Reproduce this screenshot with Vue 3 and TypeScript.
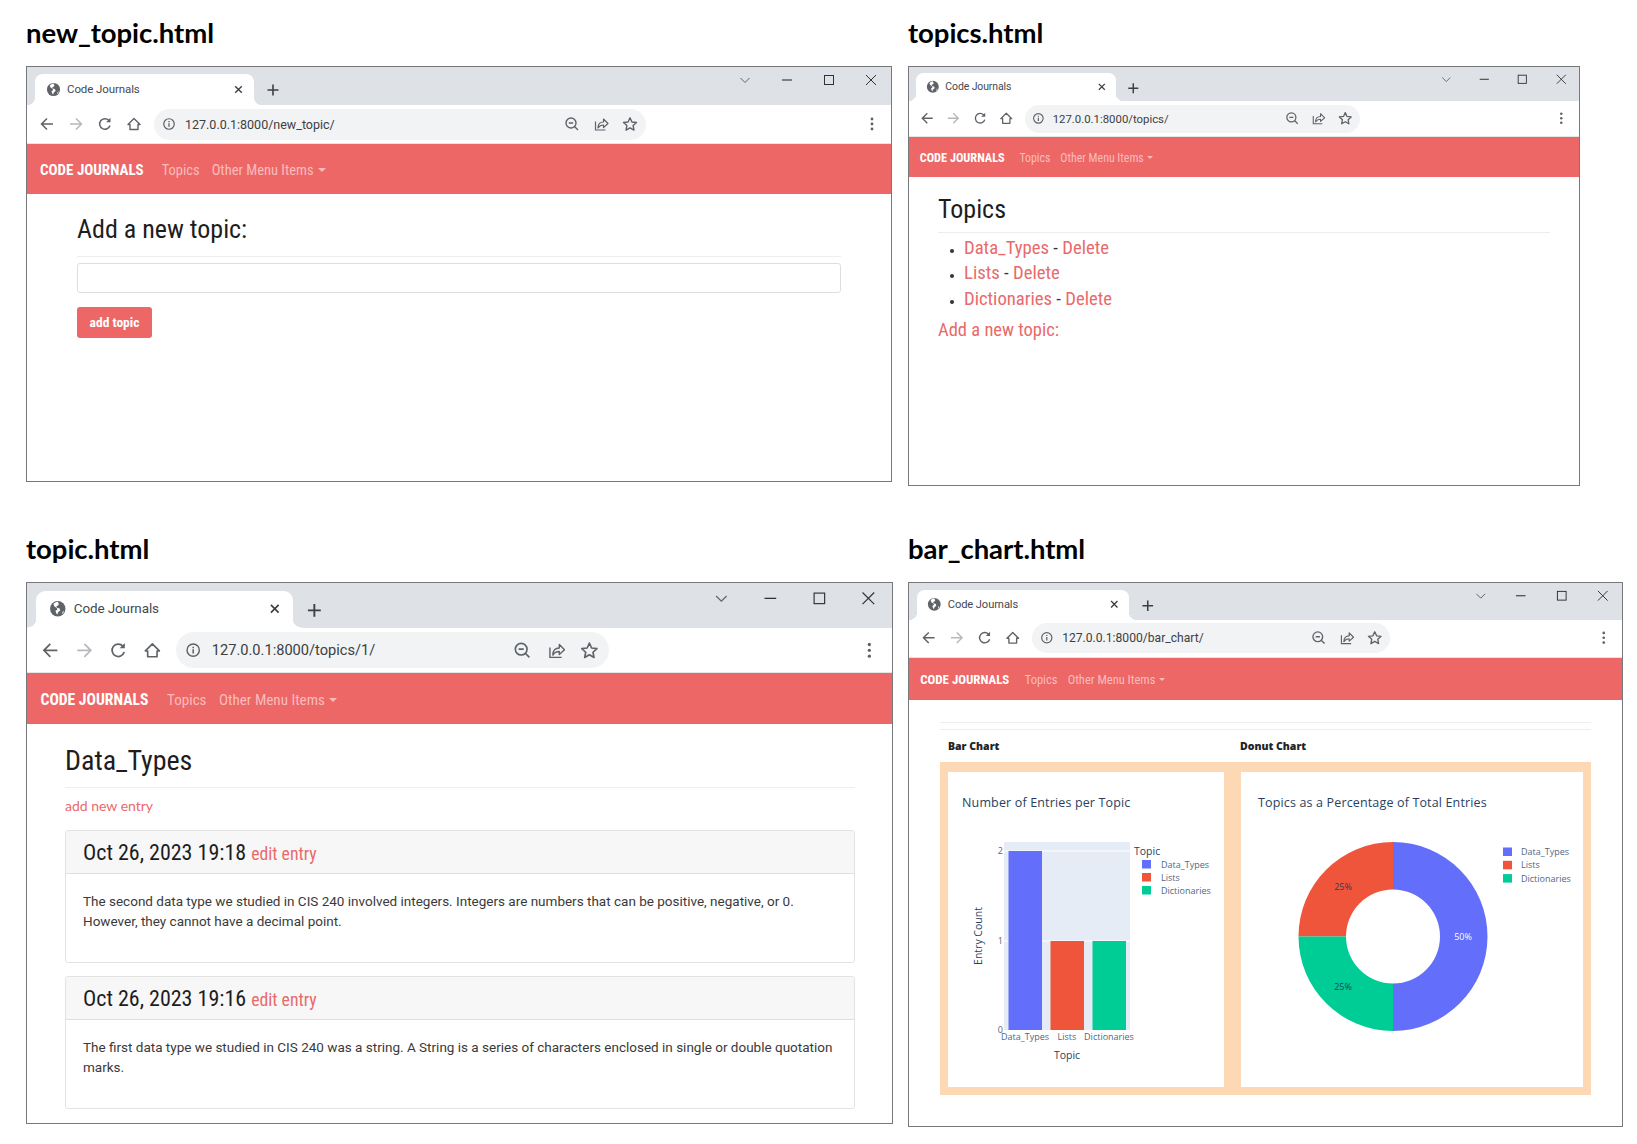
<script setup lang="ts">
interface Win { id: string; title: string; url: string }
const windows: Win[] = [
  { id: 'new', title: 'new_topic.html', url: '127.0.0.1:8000/new_topic/' },
  { id: 'topics', title: 'topics.html', url: '127.0.0.1:8000/topics/' },
  { id: 'topic', title: 'topic.html', url: '127.0.0.1:8000/topics/1/' },
  { id: 'chart', title: 'bar_chart.html', url: '127.0.0.1:8000/bar_chart/' },
]
const topics = ['Data_Types', 'Lists', 'Dictionaries']
const entries = [
  { date: 'Oct 26, 2023 19:18', lines: ['The second data type we studied in CIS 240 involved integers. Integers are numbers that can be positive, negative, or 0.', 'However, they cannot have a decimal point.'] },
  { date: 'Oct 26, 2023 19:16', lines: ['The first data type we studied in CIS 240 was a string. A String is a series of characters enclosed in single or double quotation', 'marks.'] },
]
const legend = [
  { name: 'Data_Types', color: '#636efa' },
  { name: 'Lists', color: '#ef553b' },
  { name: 'Dictionaries', color: '#00cc96' },
]
</script>

<template>
  <div class="page">
    <section v-for="w in windows" :key="w.id" class="panel">
      <h2 class="caption">{{ w.title }}</h2>
      <div class="win" :class="'win-' + w.id">
        <div class="strip">
          <div class="tab">
            <svg class="ico globe" viewBox="0 0 16 16">
              <circle cx="8" cy="8" r="7" fill="#5f6368" />
              <path d="M8 1.500c-1.500.3-3 1-4 2.200l1 2.300 2.300 1.200.2 1.600-1.600 1 .8 2.600 1 .8.5-2 2-1.600-.5-1.800-2.400-.8-.6-1.400 1.500-.6.8-1.200L8 1.500zM12.500 10.500l1-.5-.6 2-1 .8z" fill="#fff" />
            </svg>
            <span class="tab-title">Code Journals</span>
            <svg class="ico tab-x" viewBox="0 0 16 16"><path d="M4.500 4.500l7 7M11.500 4.500l-7 7" stroke="#3c4043" stroke-width="1.500" fill="none" /></svg>
          </div>
          <svg class="ico plus" viewBox="0 0 16 16"><path d="M8 2.500v11M2.500 8h11" stroke="#3c4043" stroke-width="1.600" fill="none" /></svg>
          <div class="controls">
            <svg class="ico ctl" viewBox="0 0 16 16"><path d="M3.500 6l4.500 4.500L12.500 6" stroke="#5f6368" fill="none" /></svg>
            <svg class="ico ctl" viewBox="0 0 16 16"><path d="M3 8h10" stroke="#333" stroke-width="1.100" fill="none" /></svg>
            <svg class="ico ctl" viewBox="0 0 16 16"><rect x="3.500" y="3.500" width="9" height="9" stroke="#333" fill="none" /></svg>
            <svg class="ico ctl" viewBox="0 0 16 16"><path d="M3 3l10 10M13 3L3 13" stroke="#333" fill="none" /></svg>
          </div>
        </div>
        <div class="toolbar">
          <svg class="ico nav-ico" viewBox="0 0 16 16"><path d="M14 8H2.500M8 2.500L2.500 8 8 13.500" stroke="#5f6368" stroke-width="1.500" fill="none" /></svg>
          <svg class="ico nav-ico" viewBox="0 0 16 16"><path d="M2 8h11.500M8 2.500L13.500 8 8 13.500" stroke="#b5b8bc" stroke-width="1.500" fill="none" /></svg>
          <svg class="ico nav-ico" viewBox="0 0 16 16"><path d="M13 9.500A5.300 5.300 0 1 1 11.800 4.300" stroke="#5f6368" stroke-width="1.500" fill="none" /><path d="M13.500 1.800v4.400H9.100z" fill="#5f6368" /></svg>
          <svg class="ico nav-ico" viewBox="0 0 16 16"><path d="M8 2.500l6 6h-2v5H4v-5H2z" stroke="#5f6368" stroke-width="1.400" fill="none" stroke-linejoin="round" /></svg>
          <div class="omni">
            <svg class="ico omni-i" viewBox="0 0 16 16"><circle cx="8" cy="8" r="6" stroke="#5f6368" stroke-width="1.400" fill="none" /><path d="M8 7.200v4M8 4.600v1.400" stroke="#5f6368" stroke-width="1.500" /></svg>
            <span class="url">{{ w.url }}</span>
            <div class="omni-right">
              <svg class="ico nav-ico" viewBox="0 0 16 16"><circle cx="7" cy="7" r="5" stroke="#5f6368" stroke-width="1.400" fill="none" /><path d="M4.800 7h4.400M10.500 10.500l3.500 3.500" stroke="#5f6368" stroke-width="1.400" /></svg>
              <svg class="ico nav-ico" viewBox="0 0 16 16"><path d="M2.500 5.500v8.500h10" stroke="#5f6368" stroke-width="1.200" fill="none" /><path d="M5 12c0-4 2-6 5.500-6V3l4.500 4.500-4.500 4V9C8 9 6.300 10 5 12z" stroke="#5f6368" stroke-width="1.200" fill="none" stroke-linejoin="round" /></svg>
              <svg class="ico nav-ico" viewBox="0 0 16 16"><path d="M8 1.800l1.900 4.200 4.600.5-3.400 3.100.9 4.500L8 11.800l-4 2.300.9-4.500-3.400-3.100 4.600-.5z" stroke="#5f6368" stroke-width="1.400" fill="none" stroke-linejoin="round" /></svg>
            </div>
          </div>
          <svg class="ico kebab" viewBox="0 0 16 16"><circle cx="8" cy="3" r="1.400" fill="#5f6368" /><circle cx="8" cy="8" r="1.400" fill="#5f6368" /><circle cx="8" cy="13" r="1.400" fill="#5f6368" /></svg>
        </div>
        <nav class="navbar">
          <span class="brand">CODE JOURNALS</span>
          <span class="nav-link first">Topics</span>
          <span class="nav-link">Other Menu Items</span>
          <span class="caret"></span>
        </nav>

        <main v-if="w.id === 'new'" class="content">
          <h1 class="head">Add a new topic:</h1>
          <div class="input"></div>
          <div class="btn">add topic</div>
        </main>

        <main v-else-if="w.id === 'topics'" class="content">
          <h1 class="head">Topics</h1>
          <ul class="list">
            <li v-for="t in topics" :key="t"><a>{{ t }}</a> - <a>Delete</a></li>
          </ul>
          <a class="add-topic">Add a new topic:</a>
        </main>

        <main v-else-if="w.id === 'topic'" class="content">
          <h1 class="head">Data_Types</h1>
          <a class="add-entry">add new entry</a>
          <article v-for="e in entries" :key="e.date" class="card">
            <header class="card-head">{{ e.date }} <a class="edit">edit entry</a></header>
            <p class="card-body">{{ e.lines[0] }}<br />{{ e.lines[1] }}</p>
          </article>
        </main>

        <main v-else class="content">
          <div class="rule"></div>
          <div class="rule second"></div>
          <div class="labels">
            <b>Bar Chart</b>
            <b>Donut Chart</b>
          </div>
          <div class="peach">
            <svg class="plot" viewBox="0 0 276 315" width="276" height="315">
              <text class="plot-title" x="14" y="35">Number of Entries per Topic</text>
              <rect x="56" y="70" width="126" height="188" fill="#e5ecf6" />
              <path d="M56 79h126M56 169h126" stroke="#fff" />
              <rect x="60.500" y="79" width="33.500" height="179" fill="#636efa" />
              <rect x="102.500" y="169" width="33.500" height="89" fill="#ef553b" />
              <rect x="144.500" y="169" width="33.500" height="89" fill="#00cc96" />
              <text class="tick" x="55" y="82" text-anchor="end">2</text>
              <text class="tick" x="55" y="172" text-anchor="end">1</text>
              <text class="tick" x="55" y="261" text-anchor="end">0</text>
              <text class="tick" x="77" y="268" text-anchor="middle">Data_Types</text>
              <text class="tick" x="119" y="268" text-anchor="middle">Lists</text>
              <text class="tick" x="161" y="268" text-anchor="middle">Dictionaries</text>
              <text class="axis" x="119" y="287" text-anchor="middle">Topic</text>
              <text class="axis" transform="translate(34 164) rotate(-90)" text-anchor="middle">Entry Count</text>
              <text class="axis" x="186" y="83">Topic</text>
              <g v-for="(l, i) in legend" :key="l.name">
                <rect x="194" :y="88 + i * 13" width="9" height="8.500" :fill="l.color" />
                <text class="tick" x="213" :y="96 + i * 13">{{ l.name }}</text>
              </g>
            </svg>
            <svg class="plot" viewBox="0 0 342 315" width="342" height="315">
              <text class="plot-title" x="17" y="35">Topics as a Percentage of Total Entries</text>
              <path d="M152 70A94.500 94.500 0 0 1 152 259V211.500A47 47 0 0 0 152 117.500z" fill="#636efa" />
              <path d="M152 70A94.500 94.500 0 0 0 57.500 164.500H105A47 47 0 0 1 152 117.500z" fill="#ef553b" />
              <path d="M57.500 164.500A94.500 94.500 0 0 0 152 259V211.500A47 47 0 0 1 105 164.500z" fill="#00cc96" />
              <text class="pct light" x="222" y="167.500" text-anchor="middle">50%</text>
              <text class="pct" x="102" y="118" text-anchor="middle">25%</text>
              <text class="pct" x="102" y="218" text-anchor="middle">25%</text>
              <g v-for="(l, i) in legend" :key="l.name">
                <rect x="262" :y="75.500 + i * 13.300" width="9" height="8.500" :fill="l.color" />
                <text class="tick" x="280" :y="83 + i * 13.300">{{ l.name }}</text>
              </g>
            </svg>
          </div>
        </main>
      </div>
    </section>
  </div>
</template>

<style>
html, body { margin: 0; background: #fff; }
</style>

<style scoped>
.page {
  display: grid;
  grid-template-columns: 867px 715px;
  column-gap: 15px;
  row-gap: 46px;
  padding: 16px 0 0 26px;
  width: 1637px;
  box-sizing: border-box;
  font-family: "Roboto Condensed", "Open Sans Condensed", Roboto, sans-serif;
  font-stretch: condensed;
}
.panel { display: flex; flex-direction: column; align-items: flex-start; }
.caption {
  margin: 0 0 16px;
  height: 34px;
  font: 700 27.500px/34px Lato, sans-serif;
  letter-spacing: -.05px;
  color: #000;
}
.win {
  box-sizing: border-box;
  border: 1px solid #77787c;
  overflow: hidden;
  background: #fff;
  display: flex;
  flex-direction: column;
}
.win-new { --s: 1; --p: 1; --nh: 50px; --ow: 492px; width: 866px; height: 416px; }
.win-topics { --s: .91; --p: .82; --nh: 40px; --ow: 335px; width: 672px; height: 420px; }
.win-topic { --s: 1.17; --p: 1.04; --nh: 51px; --ow: 433px; width: 867px; height: 542px; }
.win-chart { --s: .97; --p: .86; --nh: 42px; --ow: 358px; width: 715px; height: 545px; }

.strip {
  height: calc(var(--s) * 39px - 1px);
  flex: none;
  background: #dee1e6;
  display: flex;
  align-items: flex-end;
  padding-left: calc(var(--s) * 8px);
}
.tab {
  position: relative;
  box-sizing: border-box;
  width: calc(var(--s) * 219px);
  height: calc(var(--s) * 31px);
  background: #fff;
  border-radius: calc(var(--s) * 8px) calc(var(--s) * 8px) 0 0;
  display: flex;
  align-items: center;
  padding: 0 calc(var(--s) * 8px) calc(var(--s) * 1px) calc(var(--s) * 11px);
}
.tab::before, .tab::after {
  content: "";
  position: absolute;
  bottom: 0;
  width: calc(var(--s) * 8px);
  height: calc(var(--s) * 8px);
}
.tab::before { right: 100%; background: radial-gradient(circle at 0 0, #dee1e6 70%, #fff 72%); }
.tab::after { left: 100%; background: radial-gradient(circle at 100% 0, #dee1e6 70%, #fff 72%); }
.ico { width: calc(var(--s) * 16px); height: calc(var(--s) * 16px); flex: none; display: block; }
.globe { width: calc(var(--s) * 15px); height: calc(var(--s) * 15px); }
.tab-title {
  margin-left: calc(var(--s) * 6px);
  font: calc(var(--s) * 11.500px) Roboto, sans-serif;
  color: #45494e;
  letter-spacing: -.1px;
}
.tab-x { margin-left: auto; width: calc(var(--s) * 15px); height: calc(var(--s) * 15px); }
.plus { margin: 0 0 calc(var(--s) * 7px) calc(var(--s) * 11px); }
.controls {
  margin-left: auto;
  align-self: flex-start;
  margin-top: calc(var(--s) * 5px);
  display: flex;
  gap: calc(var(--s) * 26px);
  padding-right: calc(var(--s) * 12px);
}
.toolbar {
  height: calc(var(--s) * 39px);
  flex: none;
  display: flex;
  align-items: center;
  box-sizing: border-box;
  border-bottom: 1px solid #e4e5e7;
  padding-left: calc(var(--s) * 12px);
}
.toolbar > .nav-ico { margin-right: calc(var(--s) * 13px); }
.omni {
  width: var(--ow);
  margin-left: calc(var(--s) * -1px);
  height: calc(var(--s) * 31px);
  border-radius: calc(var(--s) * 16px);
  background: #f1f3f4;
  display: flex;
  align-items: center;
  padding-left: calc(var(--s) * 8px);
  box-sizing: border-box;
}
.omni-i { width: calc(var(--s) * 14px); height: calc(var(--s) * 14px); }
.url {
  margin-left: calc(var(--s) * 9px);
  font: calc(var(--s) * 12.500px) Roboto, sans-serif;
  color: #3c4043;
}
.omni-right {
  margin-left: auto;
  display: flex;
  gap: calc(var(--s) * 13px);
  padding-right: calc(var(--s) * 8px);
}
.kebab { margin-left: auto; margin-right: calc(var(--s) * 11px); }
.navbar {
  flex: none;
  box-sizing: border-box;
  height: var(--nh);
  background: #ed6767;
  display: flex;
  align-items: center;
  padding: 2px 0 0 calc(var(--p) * 13px);
  font-size: calc(var(--p) * 15px);
}
.brand { color: #fff; font-weight: 700; }
.nav-link { color: #f9bcbc; margin-left: calc(var(--p) * 12px); font-weight: 400; font-size: calc(var(--p) * 14.500px); }
.nav-link.first { margin-left: calc(var(--p) * 18px); }
.caret {
  margin-left: calc(var(--p) * 4px);
  border: calc(var(--p) * 4px) solid transparent;
  border-top-color: #f9bcbc;
  border-bottom-width: 0;
}
.content { flex: 1; }
.head {
  margin: 0;
  font-weight: 400;
  color: #1d1d1d;
  border-bottom: 1px solid #eee;
}
a { color: #e96a6a; }

.win-new .content { padding: 17px 50px 0 50px; }
.win-new .head { font-size: 26px; line-height: 36px; padding-bottom: 9px; margin-bottom: 6px; }
.input { height: 30px; box-sizing: border-box; border: 1px solid #dedede; border-radius: 3px; }
.btn {
  margin-top: 14px;
  width: 75px;
  height: 31px;
  text-align: center;
  border-radius: 3px;
  background: #ed6767;
  color: #fff;
  font-size: 13.500px;
  font-weight: 700;
  line-height: 31px;
}

.win-topics .content { padding: 13px 29px 0 29px; }
.win-topics .head { font-size: 26px; line-height: 38px; padding-bottom: 4px; }
.list { margin: 3px 0 0; padding: 0 0 0 26px; font-size: 18.700px; line-height: 25.500px; color: #333; }
.list li::marker { font-size: 12px; }
.add-topic { display: block; font-size: 18.500px; line-height: 26px; margin-top: 5px; }

.win-topic .content { padding: 18px 37px 0 38px; }
.win-topic .head { font-size: 28px; line-height: 38px; padding-bottom: 7px; }
.add-entry { display: block; font: 14px/20px Lato, sans-serif; margin-top: 8px; margin-bottom: 14px; }
.card { border: 1px solid #e3e3e3; border-radius: 3px; height: 133px; margin-bottom: 13px; overflow: hidden; box-sizing: border-box; }
.card-head {
  box-sizing: border-box;
  height: 43px;
  line-height: 44px;
  background: #f7f7f7;
  border-bottom: 1px solid #dfdfdf;
  padding-left: 17px;
  font-size: 22px;
  color: #1d1d1d;
}
.edit { font-size: 17.700px; }
.card-body {
  margin: 0;
  padding: 17px 17px 0;
  font: 13.500px/20px Roboto, sans-serif;
  font-stretch: normal;
  color: #3a3a3a;
}

.win-chart .content { padding: 22px 31px 0 31px; }
.rule { height: 1px; background: #eee; margin-bottom: 6px; }
.labels {
  display: grid;
  grid-template-columns: 276px 342px;
  column-gap: 16px;
  padding-left: 8px;
  margin-top: 7px;
  font: 700 10.500px/18px "Open Sans", sans-serif;
  color: #222;
}
.peach {
  margin-top: 7px;
  display: grid;
  grid-template-columns: 276px 342px;
  column-gap: 17px;
  width: 651px;
  box-sizing: border-box;
  padding: 10px 8px 8px;
  background: #fdd8b5;
}
.plot { background: #fff; display: block; font-stretch: normal; }
.plot text { font-family: "Open Sans", sans-serif; font-stretch: normal; }
.plot-title { font-size: 12.500px; fill: #2a3f5f; letter-spacing: .15px; }
.tick { font-size: 9px; fill: #506784; }
.axis { font-size: 10.500px; fill: #2a3f5f; }
.pct { font-size: 9px; fill: #2a3f5f; }
.pct.light { fill: #fff; }
</style>
